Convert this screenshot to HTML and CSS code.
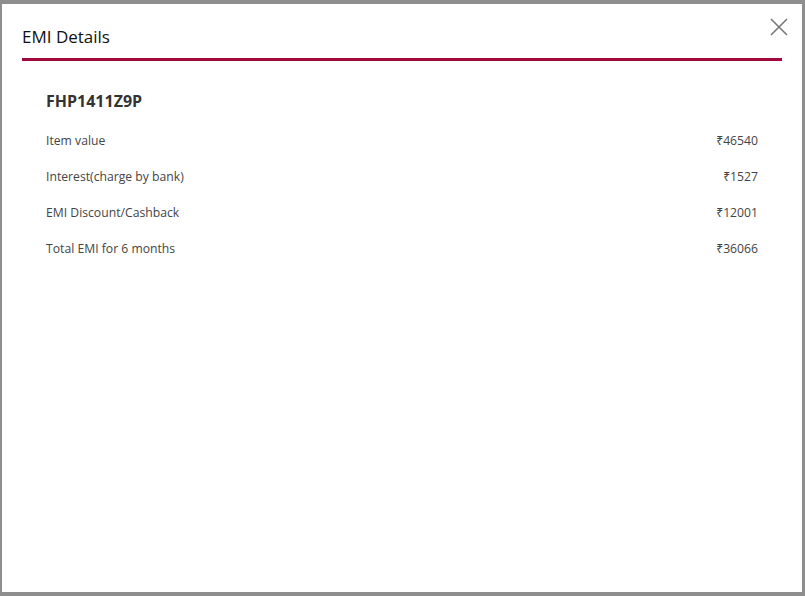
FILE: index.html
```html
<!DOCTYPE html>
<html>
<head>
<meta charset="utf-8">
<link rel="stylesheet" href="styles.css">
</head>
<body>
<div class="modal">
  <div class="modal-head">
    <h2 class="title">EMI Details</h2>
    <button class="close" aria-label="Close">
      <svg width="18" height="18" viewBox="0 0 18 18"><path d="M1 1L17 17M17 1L1 17" stroke="#777" stroke-width="1.6" fill="none"/></svg>
    </button>
  </div>
  <div class="modal-body">
    <h3 class="model">FHP1411Z9P</h3>
    <div class="row"><span>Item value</span><span>₹46540</span></div>
    <div class="row"><span>Interest(charge by bank)</span><span>₹1527</span></div>
    <div class="row"><span>EMI Discount/Cashback</span><span>₹12001</span></div>
    <div class="row"><span>Total EMI for 6 months</span><span>₹36066</span></div>
  </div>
</div>
</body>
</html>
```
FILE: styles.css
```css
html, body { margin: 0; padding: 0; }
body {
  background: #8e8e8e;
  width: 805px;
  height: 596px;
  padding: 4px 3px 4px 2px;
  box-sizing: border-box;
  font-family: "Open Sans", "Noto Sans", sans-serif;
}
.modal {
  background: #fff;
  height: 100%;
  box-sizing: border-box;
  padding: 0 20px 0 20px;
}
.modal-head {
  position: relative;
  height: 54px;
  border-bottom: 3px solid #a0093a;
}
.title {
  margin: 0;
  padding: 21px 0 0 0;
  font-size: 17px;
  font-weight: 500;
  color: #111;
  line-height: 24px;
}
.close {
  position: absolute;
  right: -6px;
  top: 14px;
  background: none;
  border: 0;
  padding: 0;
  width: 18px;
  height: 18px;
  cursor: pointer;
}
.modal-body {
  padding: 28px 24px 0 24px;
}
.model {
  margin: 0 0 19px 0;
  font-size: 16px;
  font-weight: 700;
  color: #333;
  line-height: 24px;
}
.row {
  display: flex;
  justify-content: space-between;
  font-size: 12.2px;
  color: #444;
  line-height: 18px;
  height: 36px;
}
```
